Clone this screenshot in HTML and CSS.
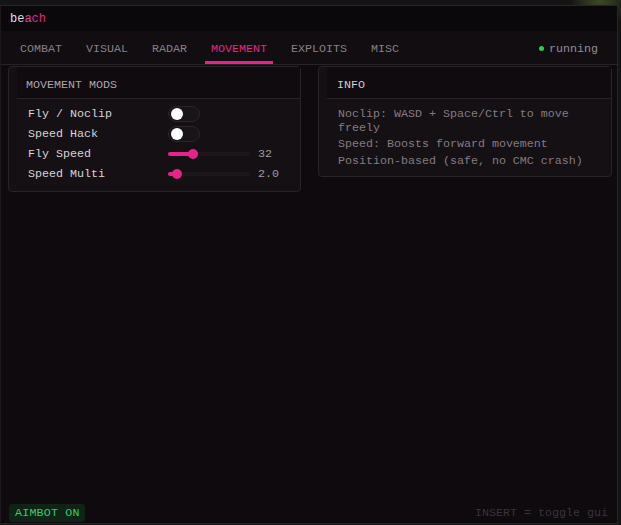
FILE: index.html
```html
<!DOCTYPE html>
<html lang="en">
	<head>
		<meta charset="UTF-8" />
		<meta name="viewport" content="width=device-width, initial-scale=1.0" />
		<title>beach</title>
		<link rel="stylesheet" href="styles.css">
	</head>
	<body>
		<div class="window">
			<!-- Title -->
			<div class="titlebar">
				<span class="title-light">be</span><span class="title-mid">a</span><span class="title-pink">ch</span>
			</div>

			<!-- Tabs -->
			<div class="tabs">
				<div class="tab">COMBAT</div>
				<div class="tab">VISUAL</div>
				<div class="tab">RADAR</div>
				<div class="tab active">MOVEMENT</div>
				<div class="tab">EXPLOITS</div>
				<div class="tab">MISC</div>
				<div class="status"><span class="dot"></span>running</div>
			</div>

			<div class="content">
				<!-- Movement mods -->
				<div class="panel panel-left">
					<div class="panel-header">MOVEMENT MODS</div>
					<div class="panel-body">
						<div class="row">
							<span class="label">Fly / Noclip</span>
							<span class="toggle"><span class="knob"></span></span>
						</div>
						<div class="row">
							<span class="label">Speed Hack</span>
							<span class="toggle"><span class="knob"></span></span>
						</div>
						<div class="row">
							<span class="label">Fly Speed</span>
							<span class="slider">
								<span class="fill" style="width: 25px"></span>
								<span class="thumb"></span>
							</span>
							<span class="value">32</span>
						</div>
						<div class="row">
							<span class="label">Speed Multi</span>
							<span class="slider">
								<span class="fill" style="width: 9px"></span>
								<span class="thumb"></span>
							</span>
							<span class="value">2.0</span>
						</div>
					</div>
				</div>

				<!-- Info -->
				<div class="panel panel-right">
					<div class="panel-header header-light">INFO</div>
					<div class="panel-body info">
						<p>Noclip: WASD + Space/Ctrl to move freely</p>
						<p>Speed: Boosts forward movement</p>
						<p>Position-based (safe, no CMC crash)</p>
					</div>
				</div>
			</div>

			<div class="footer">
				<span class="badge">AIMBOT ON</span>
				<span class="hint">INSERT = toggle gui</span>
			</div>
		</div>
	</body>
</html>
```

FILE: styles.css
```css
body {
	margin: 0;
	height: 525px;
	overflow: hidden;
	font-family: "Liberation Mono", "DejaVu Sans Mono", monospace;
	font-size: 11.67px;
	background: radial-gradient(circle at 600px 0, #3c4a26 0, #2a3320 14px, #141414 30px);
}
.window {
	margin-top: 5px;
	width: 616px;
	height: 517px;
	background-color: #0e0a0e;
	border: 1px solid #2a2229;
	border-left-color: #1e181d;
	display: flex;
	flex-direction: column;
}
.titlebar {
	height: 25px;
	padding-left: 9px;
	display: flex;
	align-items: center;
	background-color: #0b080b;
	font-size: 12px;
}
.title-light {
	color: #e0dce0;
}
.title-mid {
	color: #d24a96;
}
.title-pink {
	color: #e8228a;
}
.tabs {
	height: 33px;
	padding: 0 7px;
	display: flex;
	align-items: stretch;
	background-color: #110d11;
	border-bottom: 1px solid #2a2229;
}
.tab {
	margin: 0 6px;
	padding: 5px 6px 0 6px;
	display: flex;
	align-items: center;
	color: #86808a;
	border-bottom: 3px solid transparent;
}
.tab.active {
	color: #e8228a;
	border-bottom-color: #e8228a;
}
.status {
	margin-left: auto;
	padding: 3px 12px 0 0;
	display: flex;
	align-items: center;
	color: #948d96;
}
.dot {
	width: 5px;
	height: 5px;
	border-radius: 50%;
	background-color: #2ecc55;
	margin-right: 5px;
	margin-bottom: 2px;
}
.content {
	padding: 1px 0 0 7px;
	display: flex;
	gap: 17px;
	align-items: flex-start;
}
.panel {
	background-color: #141014;
	border: 1px solid #2b2329;
	border-radius: 4px;
}
.panel-left {
	width: 291px;
}
.panel-right {
	width: 292px;
}
.panel-header {
	margin-left: 8px;
	height: 27px;
	padding: 4px 0 0 9px;
	display: flex;
	align-items: center;
	background-color: #0f0b0f;
	border-bottom: 1px solid #2b2329;
	color: #aea5b1;
}
.header-light {
	padding-left: 10px;
	color: #d2ccd4;
}
.panel-body {
	padding: 5px 19px 7px 19px;
}
.row {
	height: 20px;
	display: flex;
	align-items: center;
}
.label {
	width: 140px;
	color: #d8d4d8;
}
.toggle {
	position: relative;
	width: 30px;
	height: 14px;
	border-radius: 8px;
	background-color: #191418;
	border: 1px solid #2c242a;
}
.knob {
	position: absolute;
	left: 2px;
	top: 1px;
	width: 12px;
	height: 12px;
	border-radius: 50%;
	background-color: #ffffff;
}
.slider {
	position: relative;
	width: 82px;
	height: 4px;
	border-radius: 2px;
	background-color: #1c171b;
	display: flex;
}
.fill {
	height: 4px;
	border-radius: 2px;
	background-color: #e8228a;
}
.thumb {
	width: 10px;
	height: 10px;
	margin: -3px 0 0 -5px;
	border-radius: 50%;
	background-color: #e8228a;
}
.value {
	margin-left: 8px;
	color: #a19aa3;
}
.info {
	padding-top: 8px;
	padding-bottom: 8px;
	color: #857b83;
}
.info p {
	margin: 0 0 2px 0;
	line-height: 14px;
}
.info p:nth-child(2) {
	margin-bottom: 3px;
}
.info p:last-child {
	margin-bottom: 0;
}
.footer {
	margin-top: auto;
	padding: 0 9px 1px 8px;
	display: flex;
	align-items: center;
	justify-content: space-between;
}
.badge {
	height: 18px;
	padding: 0 5px 0 6px;
	display: flex;
	align-items: center;
	background-color: #0f2416;
	border-radius: 3px;
	color: #38cc63;
	letter-spacing: 0.2px;
}
.hint {
	color: #3a343c;
}
```
